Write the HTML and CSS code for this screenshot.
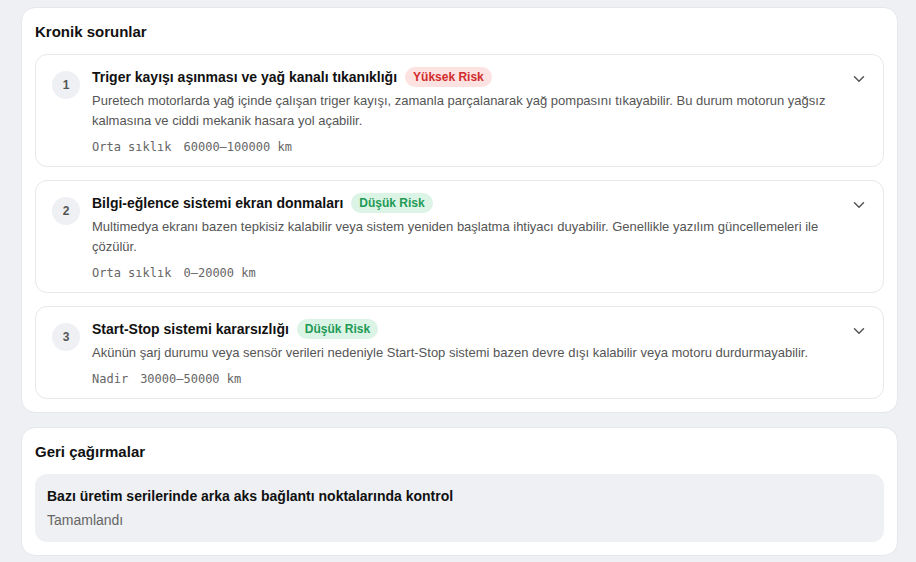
FILE: index.html
```html
<!DOCTYPE html>
<html lang="tr">
<head>
    <meta charset="UTF-8">
    <meta name="viewport" content="width=device-width, initial-scale=1.0">
    <title>Kronik sorunlar</title>
    <link rel="stylesheet" href="styles.css">
</head>
<body>
    <section class="card">
        <h2>Kronik sorunlar</h2>
        <div class="issue-list">
            <div class="issue">
                <span class="num">1</span>
                <div class="issue-body">
                    <div class="issue-title">
                        <h3>Triger kayışı aşınması ve yağ kanalı tıkanıklığı</h3>
                        <span class="badge high">Yüksek Risk</span>
                    </div>
                    <p>Puretech motorlarda yağ içinde çalışan triger kayışı, zamanla parçalanarak yağ pompasını tıkayabilir. Bu durum motorun yağsız kalmasına ve ciddi mekanik hasara yol açabilir.</p>
                    <div class="meta"><span>Orta sıklık</span><span>60000–100000 km</span></div>
                </div>
                <span class="chevron"><svg width="12" height="8" viewBox="0 0 12 8"><path d="M1.5 1.8 6 6.2l4.5-4.4" fill="none" stroke="#555" stroke-width="1.5" stroke-linecap="round" stroke-linejoin="round"/></svg></span>
            </div>
            <div class="issue">
                <span class="num">2</span>
                <div class="issue-body">
                    <div class="issue-title">
                        <h3>Bilgi-eğlence sistemi ekran donmaları</h3>
                        <span class="badge low">Düşük Risk</span>
                    </div>
                    <p>Multimedya ekranı bazen tepkisiz kalabilir veya sistem yeniden başlatma ihtiyacı duyabilir. Genellikle yazılım güncellemeleri ile çözülür.</p>
                    <div class="meta"><span>Orta sıklık</span><span>0–20000 km</span></div>
                </div>
                <span class="chevron"><svg width="12" height="8" viewBox="0 0 12 8"><path d="M1.5 1.8 6 6.2l4.5-4.4" fill="none" stroke="#555" stroke-width="1.5" stroke-linecap="round" stroke-linejoin="round"/></svg></span>
            </div>
            <div class="issue">
                <span class="num">3</span>
                <div class="issue-body">
                    <div class="issue-title">
                        <h3>Start-Stop sistemi kararsızlığı</h3>
                        <span class="badge low">Düşük Risk</span>
                    </div>
                    <p>Akünün şarj durumu veya sensör verileri nedeniyle Start-Stop sistemi bazen devre dışı kalabilir veya motoru durdurmayabilir.</p>
                    <div class="meta"><span>Nadir</span><span>30000–50000 km</span></div>
                </div>
                <span class="chevron"><svg width="12" height="8" viewBox="0 0 12 8"><path d="M1.5 1.8 6 6.2l4.5-4.4" fill="none" stroke="#555" stroke-width="1.5" stroke-linecap="round" stroke-linejoin="round"/></svg></span>
            </div>
        </div>
    </section>

    <section class="card">
        <h2>Geri çağırmalar</h2>
        <div class="recall">
            <h3>Bazı üretim serilerinde arka aks bağlantı noktalarında kontrol</h3>
            <p>Tamamlandı</p>
        </div>
    </section>
</body>
</html>
```

FILE: styles.css
```css
body {
    margin: 0;
    padding: 7px 18px 7px 21px;
    background-color: #eef0f3;
    font-family: "Liberation Sans", Arial, sans-serif;
    color: #111;
    display: flex;
    flex-direction: column;
    gap: 14px;
}
.card {
    background: white;
    border: 1px solid #e4e7eb;
    border-radius: 14px;
    padding: 13px;
}
h2 {
    margin: 0 0 11px;
    font-size: 15px;
    line-height: 22px;
    font-weight: bold;
}
.issue-list {
    display: flex;
    flex-direction: column;
    gap: 13px;
}
.issue {
    display: flex;
    align-items: flex-start;
    gap: 12px;
    border: 1px solid #e6e8eb;
    border-radius: 12px;
    padding: 12px 16px 9px;
}
.num {
    flex: none;
    width: 28px;
    height: 28px;
    margin-top: 4px;
    border-radius: 50%;
    background: #eef0f3;
    color: #555;
    font-size: 12px;
    font-weight: bold;
    display: flex;
    align-items: center;
    justify-content: center;
}
.issue-body {
    flex: 1;
    min-width: 0;
}
.issue-title {
    display: flex;
    align-items: center;
    gap: 8px;
    height: 20px;
}
h3 {
    margin: 0;
    font-size: 14px;
    line-height: 20px;
    font-weight: bold;
}
.badge {
    font-size: 12px;
    font-weight: bold;
    line-height: 20px;
    padding: 0 8px;
    border-radius: 10px;
}
.badge.high {
    background: #fde2e2;
    color: #d12c2c;
}
.badge.low {
    background: #dcf4e6;
    color: #1e9a55;
}
.issue p {
    margin: 4px 0 0;
    font-size: 13px;
    line-height: 20px;
    color: #555;
}
.meta {
    margin-top: 6px;
    display: flex;
    gap: 12px;
    font-family: "DejaVu Sans Mono", "Liberation Mono", monospace;
    font-size: 12px;
    line-height: 20px;
    color: #666;
}
.chevron {
    flex: none;
    width: 20px;
    height: 20px;
    display: flex;
    align-items: center;
    justify-content: center;
    margin: 2px -2px 0 0;
}
.recall {
    background: #eef0f3;
    border-radius: 12px;
    padding: 12px;
}
.recall p {
    margin: 4px 0 0;
    font-size: 14px;
    line-height: 20px;
    color: #666;
}
```
